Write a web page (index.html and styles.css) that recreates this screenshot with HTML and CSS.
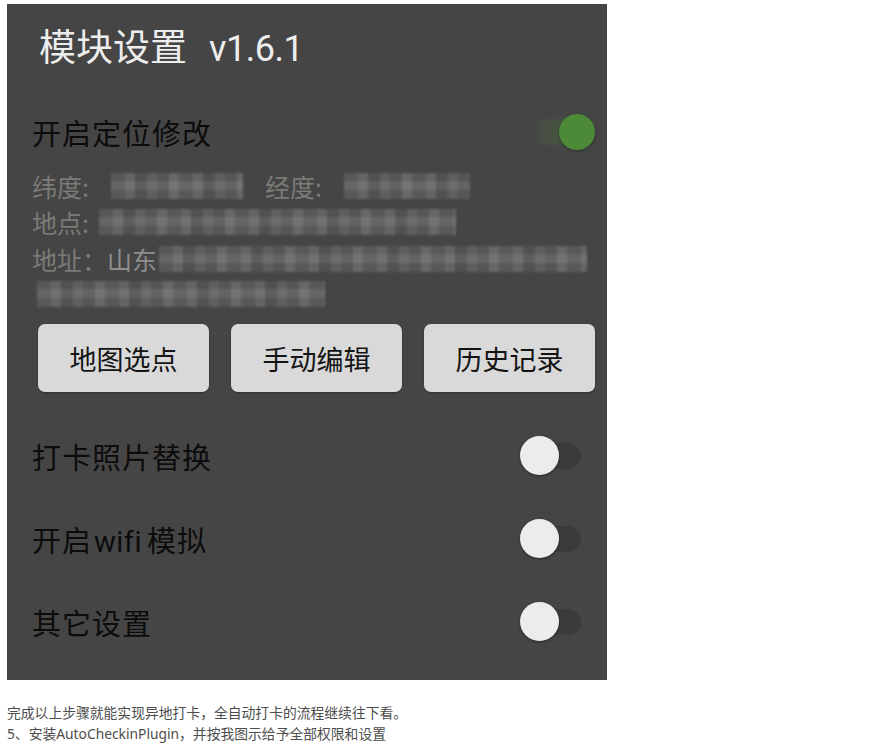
FILE: index.html
```html
<!DOCTYPE html>
<html lang="zh-CN">
<head>
  <meta charset="UTF-8" />
  <meta name="viewport" content="width=device-width, initial-scale=1.0" />
  <title>模块设置</title>
  <link rel="stylesheet" href="styles.css">
</head>
<body>

  <!-- 截图 -->
  <div class="shot">
    <div class="title">模块设置<span class="ver">v1.6.1</span></div>

    <div class="row row-on">
      <span class="label">开启定位修改</span>
      <span class="toggle on"><span class="track"></span><span class="thumb"></span></span>
    </div>

    <div class="info">
      <div class="line">
        <span>纬度:</span><span class="mosaic" style="width:132px"></span>
        <span class="sub">经度:</span><span class="mosaic" style="width:126px"></span>
      </div>
      <div class="line">
        <span>地点:</span><span class="mosaic" style="width:357px"></span>
      </div>
      <div class="line">
        <span>地址：</span><span class="city">山东</span><span class="mosaic" style="width:428px"></span>
      </div>
      <div class="line">
        <span class="mosaic first" style="width:288px"></span>
      </div>
    </div>

    <div class="buttons">
      <button class="btn">地图选点</button>
      <button class="btn">手动编辑</button>
      <button class="btn">历史记录</button>
    </div>

    <div class="row">
      <span class="label">打卡照片替换</span>
      <span class="toggle"><span class="track"></span><span class="thumb"></span></span>
    </div>
    <div class="row">
      <span class="label">开启<span class="latin">wifi</span>模拟</span>
      <span class="toggle"><span class="track"></span><span class="thumb"></span></span>
    </div>
    <div class="row">
      <span class="label">其它设置</span>
      <span class="toggle"><span class="track"></span><span class="thumb"></span></span>
    </div>
  </div>

  <!-- 正文 -->
  <div class="text">
    <p>完成以上步骤就能实现异地打卡，全自动打卡的流程继续往下看。</p>
    <p>5、安装AutoCheckinPlugin，并按我图示给予全部权限和设置</p>
  </div>

</body>
</html>
```

FILE: styles.css
```css
* { margin: 0; padding: 0; box-sizing: border-box; }
body { background: #fff; font-family: "Noto Sans CJK SC", "Noto Sans", sans-serif; padding: 4px 0 0 7px; }

/* 截图 */
.shot { width: 600px; height: 676px; background: #454545; padding-left: 25px; }
.title { padding: 14px 0 0 7px; height: 68px; line-height: 54px; font-size: 37px; color: #ededed; }
.ver { margin-left: 22px; font-family: "Roboto", sans-serif; font-size: 36px; letter-spacing: -0.5px; }

.row { display: flex; justify-content: space-between; align-items: center; height: 83px; padding-right: 26px; }
.row-on { height: 56px; margin-top: 32px; padding-right: 12px; }
.label { font-size: 29px; color: #0c0c0c; letter-spacing: 1px; }
.latin { font-family: "Roboto", sans-serif; margin: 0 5px 0 2px; letter-spacing: 0.5px; }

/* 开关 */
.toggle { position: relative; width: 61px; height: 40px; }
.toggle .track { position: absolute; left: 5px; right: 0; top: 7px; height: 26px; border-radius: 13px; background: #3b3b3b; }
.toggle .thumb { position: absolute; left: 0; top: 0; width: 39px; height: 39px; border-radius: 50%; background: #ececec; box-shadow: 0 1px 3px rgba(0, 0, 0, 0.4); }
.toggle.on .track { left: -6px; right: 16px; background: linear-gradient(90deg, rgba(80, 130, 60, 0), rgba(80, 130, 60, 0.45)); filter: blur(2px); }
.toggle.on .thumb { left: auto; right: 0; top: 2px; width: 36px; height: 36px; background: #4c8a38; box-shadow: 0 1px 3px rgba(0, 0, 0, 0.35); }

/* 位置信息 */
.info { margin-top: 8px; font-size: 25px; color: #7a7b76; }
.line { display: flex; align-items: center; height: 36px; }
.line:nth-child(3) { height: 37px; }
.line:nth-child(4) { height: 34px; }
.sub { margin-left: 22px; }
.city { color: #8e8e8e; }
.mosaic {
  display: inline-block; height: 26px; margin-left: 18px; filter: blur(1px);
  background:
    repeating-linear-gradient(0deg, rgba(0,0,0,0.06) 0 9px, rgba(255,255,255,0.05) 9px 18px),
    repeating-linear-gradient(90deg, #5e5e5e 0 14px, #6a6a6a 14px 24px, #565656 24px 36px, #656565 36px 46px, #5b5b5b 46px 58px, #6d6d6d 58px 68px);
}
.line:first-child .mosaic { margin-left: 22px; }
.mosaic.first { margin-left: 5px; }
.line:nth-child(2) .mosaic { margin-left: 10px; }
.line:nth-child(3) .mosaic { margin-left: 2px; }

/* 按钮 */
.buttons { display: flex; gap: 22px; margin: 13px 12px 22px 6px; }
.btn { flex: 1; height: 68px; border: none; border-radius: 7px; background: #d9d9d9; color: #141414; font-family: inherit; font-size: 27px; box-shadow: 0 1px 2px rgba(0, 0, 0, 0.3); }

/* 正文 */
.text { margin-top: 22px; font-family: "Noto Sans", "Noto Sans CJK SC", sans-serif; font-size: 13.8px; line-height: 21px; color: #4d4d4d; }
```
